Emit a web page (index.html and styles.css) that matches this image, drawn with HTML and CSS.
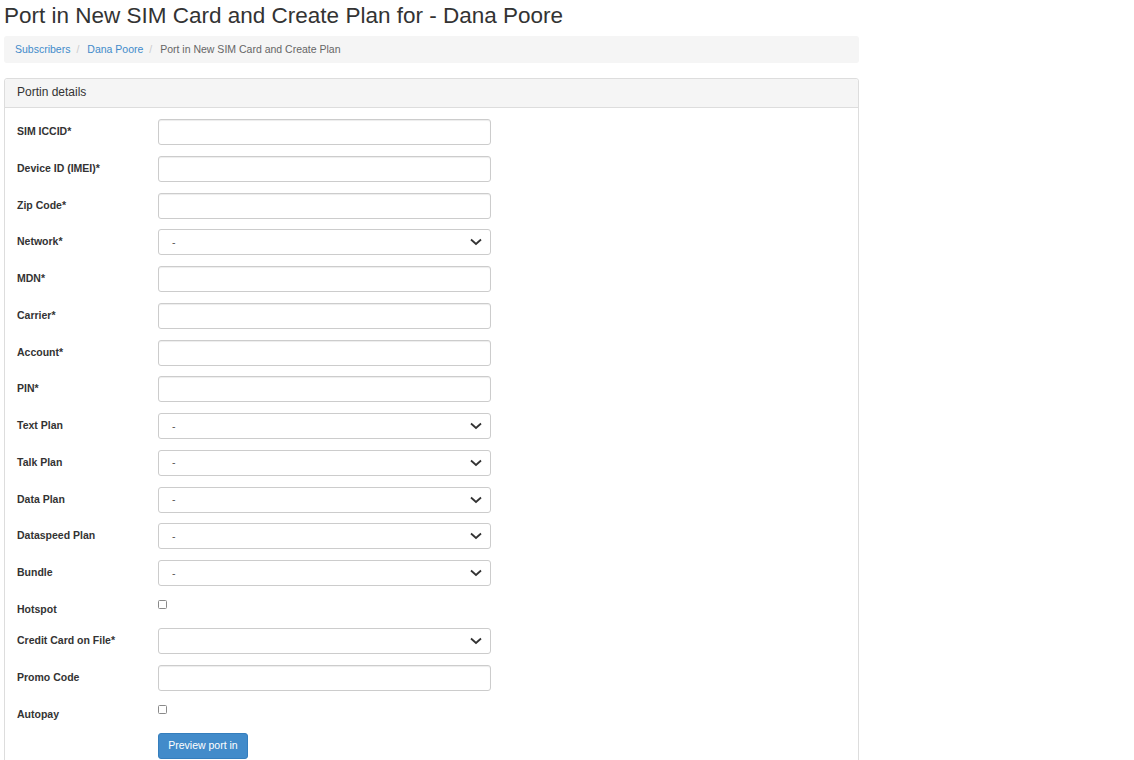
FILE: index.html
```html
<!DOCTYPE html>
<html>
<head>
<meta charset="utf-8">
<link rel="stylesheet" href="styles.css">
</head>
<body>
<div class="page">
  <h2 class="title">Port in New SIM Card and Create Plan for - Dana Poore</h2>
  <ol class="breadcrumb">
    <li><a href="#">Subscribers</a></li>
    <li><a href="#">Dana Poore</a></li>
    <li class="active">Port in New SIM Card and Create Plan</li>
  </ol>
  <div class="panel">
    <div class="panel-heading">Portin details</div>
    <form class="panel-body">
      <div class="form-group"><label>SIM ICCID*</label><input class="form-control" type="text"></div>
      <div class="form-group"><label>Device ID (IMEI)*</label><input class="form-control" type="text"></div>
      <div class="form-group"><label>Zip Code*</label><input class="form-control" type="text"></div>
      <div class="form-group"><label>Network*</label><div class="select"><span>-</span><svg viewBox="0 0 12 8" width="12" height="8"><path d="M1 1.5 L6 6 L11 1.5" fill="none" stroke="#333" stroke-width="1.8"/></svg></div></div>
      <div class="form-group"><label>MDN*</label><input class="form-control" type="text"></div>
      <div class="form-group"><label>Carrier*</label><input class="form-control" type="text"></div>
      <div class="form-group"><label>Account*</label><input class="form-control" type="text"></div>
      <div class="form-group"><label>PIN*</label><input class="form-control" type="text"></div>
      <div class="form-group"><label>Text Plan</label><div class="select"><span>-</span><svg viewBox="0 0 12 8" width="12" height="8"><path d="M1 1.5 L6 6 L11 1.5" fill="none" stroke="#333" stroke-width="1.8"/></svg></div></div>
      <div class="form-group"><label>Talk Plan</label><div class="select"><span>-</span><svg viewBox="0 0 12 8" width="12" height="8"><path d="M1 1.5 L6 6 L11 1.5" fill="none" stroke="#333" stroke-width="1.8"/></svg></div></div>
      <div class="form-group"><label>Data Plan</label><div class="select"><span>-</span><svg viewBox="0 0 12 8" width="12" height="8"><path d="M1 1.5 L6 6 L11 1.5" fill="none" stroke="#333" stroke-width="1.8"/></svg></div></div>
      <div class="form-group"><label>Dataspeed Plan</label><div class="select"><span>-</span><svg viewBox="0 0 12 8" width="12" height="8"><path d="M1 1.5 L6 6 L11 1.5" fill="none" stroke="#333" stroke-width="1.8"/></svg></div></div>
      <div class="form-group"><label>Bundle</label><div class="select"><span>-</span><svg viewBox="0 0 12 8" width="12" height="8"><path d="M1 1.5 L6 6 L11 1.5" fill="none" stroke="#333" stroke-width="1.8"/></svg></div></div>
      <div class="form-group check-group"><label>Hotspot</label><div class="check-wrap"><span class="checkbox"></span></div></div>
      <div class="form-group"><label>Credit Card on File*</label><div class="select"><span></span><svg viewBox="0 0 12 8" width="12" height="8"><path d="M1 1.5 L6 6 L11 1.5" fill="none" stroke="#333" stroke-width="1.8"/></svg></div></div>
      <div class="form-group"><label>Promo Code</label><input class="form-control" type="text"></div>
      <div class="form-group check-group"><label>Autopay</label><div class="check-wrap"><span class="checkbox"></span></div></div>
      <div class="form-group"><span></span><div><button type="button" class="btn">Preview port in</button></div></div>
    </form>
  </div>
</div>
</body>
</html>
```

FILE: styles.css
```css
* { box-sizing: border-box; }
html, body { margin: 0; padding: 0; background: #fff; }
body {
  font-family: "Liberation Sans", Arial, sans-serif;
  font-size: 10.5px;
  line-height: 15px;
  color: #333;
}
.page {
  width: 855px;
  margin-left: 4px;
}
.title {
  margin: 0;
  padding-top: 2px;
  height: 36px;
  font-size: 22.5px;
  line-height: 27px;
  font-weight: 400;
  color: #333;
}
.breadcrumb {
  list-style: none;
  margin: 0 0 15px 0;
  padding: 6px 11px;
  background: #f5f5f5;
  border-radius: 3px;
  display: flex;
  height: 27px;
}
.breadcrumb li { color: #666; }
.breadcrumb li + li::before {
  content: "/\00a0";
  color: #ccc;
  padding: 0 5px 0 6px;
}
.breadcrumb a { color: #428bca; text-decoration: none; }
.panel {
  border: 1px solid #ddd;
  border-radius: 3px;
  height: 700px;
}
.panel-heading {
  background: #f5f5f5;
  border-bottom: 1px solid #ddd;
  padding: 6px 12px 7px;
  height: 29px;
  font-size: 12px;
  line-height: 15px;
  border-radius: 3px 3px 0 0;
}
.panel-body {
  padding: 11px 12px;
  display: flex;
  flex-direction: column;
}
.form-group {
  display: grid;
  grid-template-columns: 141px 333px;
  margin-bottom: 10.75px;
  min-height: 26px;
}
.form-group label {
  font-weight: 700;
  padding-top: 5px;
  line-height: 15px;
}
.form-control {
  width: 333px;
  height: 26px;
  border: 1px solid #ccc;
  border-radius: 3px;
  box-shadow: inset 0 1px 1px rgba(0,0,0,0.075);
  font: inherit;
  padding: 4px 9px;
  margin: 0;
  background: #fff;
}
.select {
  width: 333px;
  height: 26px;
  border: 1px solid #ccc;
  border-radius: 3px;
  display: flex;
  align-items: center;
  justify-content: space-between;
  padding: 0 8px 0 13px;
  color: #555;
}
.select svg { display: block; }
.check-group { min-height: 20px; margin-bottom: 11.25px; }
.check-group label { padding-top: 5px; }
.check-wrap { padding-top: 3px; }
.checkbox {
  display: block;
  width: 9px;
  height: 9px;
  border: 1px solid #8a8a8a;
  border-radius: 1.5px;
  background: #fff;
}
.btn {
  font: inherit;
  color: #fff;
  background: #428bca;
  border: 1px solid #357ebd;
  border-radius: 3px;
  height: 26px;
  width: 90px;
  padding: 0 9px;
  cursor: pointer;
}
```
